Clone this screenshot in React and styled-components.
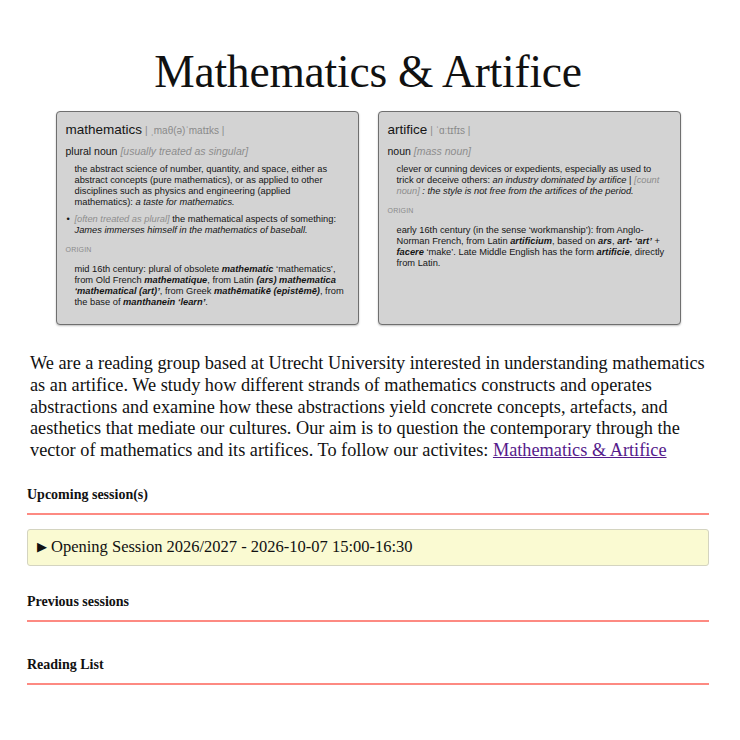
import React from "react";
import styled, { createGlobalStyle } from "styled-components";

const GlobalStyle = createGlobalStyle`
  body {
    margin: 0;
    background: #fff;
    color: #111;
    font-family: "Liberation Serif", "Times New Roman", serif;
  }
`;

const Page = styled.main`
  width: 682px;
  margin: 0 0 0 27px;
  padding-top: 43px;
`;

const Title = styled.h1`
  margin: 0;
  text-align: center;
  font-weight: 400;
  font-size: 45.5px;
  line-height: 57px;
  letter-spacing: -0.2px;
`;

const Cards = styled.div`
  display: flex;
  justify-content: center;
  gap: 19px;
  margin-top: 11px;
`;

const Card = styled.div`
  width: 283px;
  height: 193px;
  padding: 9px 9px 10px 9px;
  background: #d3d3d3;
  border: 1px solid #6f6f6f;
  border-radius: 4px;
  box-shadow: 0 1px 2px rgba(0, 0, 0, 0.25);
  font-family: "Liberation Sans", Arial, sans-serif;
  color: #151515;
`;

const Headword = styled.div`
  font-size: 13.5px;
  line-height: 18px;
  margin-bottom: 4px;
`;

const Pron = styled.span`
  font-size: 10px;
  color: #8a8a8a;
  margin-left: 3px;
`;

const Pos = styled.div`
  font-size: 10.5px;
  line-height: 14px;
  margin-bottom: 6px;
`;

const Note = styled.span`
  color: #8d8d8d;
  font-style: italic;
`;

const Def = styled.p`
  margin: 0 4px ${(p) => p.$after || 0}px 9px;
  font-size: 9.3px;
  line-height: 11px;
  position: relative;
`;

const Bullet = styled.span`
  position: absolute;
  left: -8px;
  top: 0;
`;

const Label = styled.div`
  font-size: 7px;
  color: #8a8a8a;
  letter-spacing: 0.2px;
  margin: 0 0 11px 0;
`;

const Ex = styled.i``;

const Strong = styled.b`
  font-style: italic;
`;

const Intro = styled.p`
  margin: 28px 0 0 3px;
  font-size: 18.3px;
  line-height: 21.8px;
  white-space: nowrap;

  a {
    color: #551a8b;
  }
`;

const Section = styled.section`
  margin-top: ${(p) => p.$top}px;
`;

const SectionTitle = styled.h3`
  margin: 0;
  font-size: 14px;
  line-height: 18px;
  font-weight: 700;
  padding-bottom: 9px;
  border-bottom: 2px solid #fd8a82;
`;

const Session = styled.details`
  margin-top: 14px;
  background: #fafad2;
  border: 1px solid #d4d4c0;
  border-radius: 3px;
  padding: 6px 9px 7px;

  summary {
    list-style: none;
    font-size: 16.5px;
    line-height: 22px;
    cursor: pointer;
  }

  summary::-webkit-details-marker {
    display: none;
  }
`;

const Arrow = styled.span`
  font-size: 13px;
  margin-right: 4px;
  vertical-align: 1px;
`;

export default function App() {
  return (
    <>
      <GlobalStyle />
      <Page>
        <Title>Mathematics &amp; Artifice</Title>

        <Cards>
          <Card>
            <Headword>
              mathematics<Pron>| ˌmaθ(ə)ˈmatɪks |</Pron>
            </Headword>
            <Pos>
              plural noun <Note>[usually treated as singular]</Note>
            </Pos>
            <Def $after={6}>
              the abstract science of number, quantity, and space, either as
              abstract concepts (pure mathematics), or as applied to other
              disciplines such as physics and engineering (applied
              mathematics): <Ex>a taste for mathematics.</Ex>
            </Def>
            <Def $after={10}>
              <Bullet>•</Bullet>
              <Note>[often treated as plural]</Note> the mathematical aspects
              of something: <Ex>James immerses himself in the mathematics of
              baseball.</Ex>
            </Def>
            <Label>ORIGIN</Label>
            <Def>
              mid 16th century: plural of obsolete <Strong>mathematic</Strong>{" "}
              ‘mathematics’, from Old French <Strong>mathematique</Strong>, from
              Latin <Strong>(ars) mathematica ‘mathematical (art)’</Strong>,
              from Greek <Strong>mathēmatikē (epistēmē)</Strong>, from the base
              of <Strong>manthanein ‘learn’</Strong>.
            </Def>
          </Card>

          <Card>
            <Headword>
              artifice<Pron>| ˈɑːtɪfɪs |</Pron>
            </Headword>
            <Pos>
              noun <Note>[mass noun]</Note>
            </Pos>
            <Def $after={10}>
              clever or cunning devices or expedients, especially as used to
              trick or deceive others: <Ex>an industry dominated by artifice</Ex>{" "}
              | <Note>[count noun]</Note> <Ex>: the style is not free from the
              artifices of the period.</Ex>
            </Def>
            <Label>ORIGIN</Label>
            <Def>
              early 16th century (in the sense ‘workmanship’): from Anglo-
              Norman French, from Latin <Strong>artificium</Strong>, based on{" "}
              <Strong>ars</Strong>, <Strong>art- ‘art’</Strong> +{" "}
              <Strong>facere</Strong> ‘make’. Late Middle English has the form{" "}
              <Strong>artificie</Strong>, directly from Latin.
            </Def>
          </Card>
        </Cards>

        <Intro>
          We are a reading group based at Utrecht University interested in
          understanding mathematics
          <br />
          as an artifice. We study how different strands of mathematics
          constructs and operates
          <br />
          abstractions and examine how these abstractions yield concrete
          concepts, artefacts, and
          <br />
          aesthetics that mediate our cultures. Our aim is to question the
          contemporary through the
          <br />
          vector of mathematics and its artifices. To follow our activites:{" "}
          <a href="#">Mathematics &amp; Artifice</a>
        </Intro>

        <Section $top={24}>
          <SectionTitle>Upcoming session(s)</SectionTitle>
          <Session>
            <summary>
              <Arrow>▶</Arrow>Opening Session 2026/2027 - 2026-10-07
              15:00-16:30
            </summary>
          </Session>
        </Section>

        <Section $top={27}>
          <SectionTitle>Previous sessions</SectionTitle>
        </Section>

        <Section $top={34}>
          <SectionTitle>Reading List</SectionTitle>
        </Section>
      </Page>
    </>
  );
}
